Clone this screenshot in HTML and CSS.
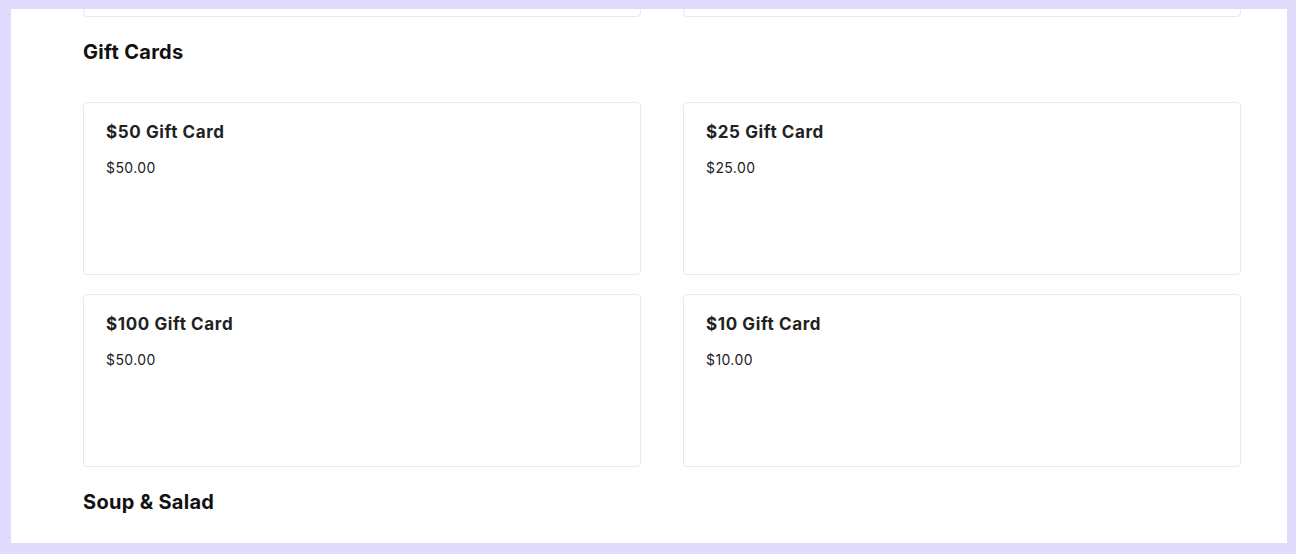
FILE: index.html
```html
<!DOCTYPE html>
<html>
<head>
<meta charset="utf-8">
<link rel="stylesheet" href="styles.css">
</head>
<body>
<div class="frame">
  <div class="page">
    <div class="menu">
      <section class="category category-prev">
        <div class="grid">
          <div class="card"></div>
          <div class="card"></div>
        </div>
      </section>
      <section class="category">
        <h2 class="category-title">Gift Cards</h2>
        <div class="grid">
          <div class="card">
            <h3 class="item-name">$50 Gift Card</h3>
            <p class="item-price">$50.00</p>
          </div>
          <div class="card">
            <h3 class="item-name">$25 Gift Card</h3>
            <p class="item-price">$25.00</p>
          </div>
          <div class="card">
            <h3 class="item-name">$100 Gift Card</h3>
            <p class="item-price">$50.00</p>
          </div>
          <div class="card">
            <h3 class="item-name">$10 Gift Card</h3>
            <p class="item-price">$10.00</p>
          </div>
        </div>
      </section>
      <section class="category">
        <h2 class="category-title">Soup &amp; Salad</h2>
        <div class="grid">
          <div class="card"></div>
          <div class="card"></div>
        </div>
      </section>
    </div>
  </div>
</div>
</body>
</html>
```
FILE: styles.css
```css
html, body {
  margin: 0;
  padding: 0;
}
body {
  background: #dedbfc;
  font-family: "Inter", "Liberation Sans", sans-serif;
  color: #1a1a1a;
}
.frame {
  padding: 9px 9px 11px 11px;
  height: 554px;
  box-sizing: border-box;
}
.page {
  background: #ffffff;
  height: 534px;
  overflow: hidden;
}
.menu {
  width: 1158px;
  margin-left: 72px;
  margin-top: -165px;
}
.category-title {
  margin: 0;
  padding-top: 20px;
  height: 61px;
  box-sizing: border-box;
  font-size: 20px;
  line-height: 30px;
  font-weight: 700;
  color: #111;
  letter-spacing: 0.3px;
}
.grid {
  display: grid;
  grid-template-columns: 1fr 1fr;
  column-gap: 42px;
  row-gap: 19px;
  margin-top: 24px;
}
.category-prev .grid {
  margin-top: 0;
}
.card {
  height: 173px;
  box-sizing: border-box;
  border: 1px solid #e9e9e9;
  border-radius: 4px;
  padding: 17px 22px;
}
.item-name {
  margin: 0;
  font-size: 17px;
  line-height: 24px;
  font-weight: 700;
  color: #222;
  letter-spacing: 0.6px;
}
.item-price {
  margin: 14px 0 0;
  font-size: 14px;
  line-height: 20px;
  color: #222;
  letter-spacing: 0.4px;
}
```
